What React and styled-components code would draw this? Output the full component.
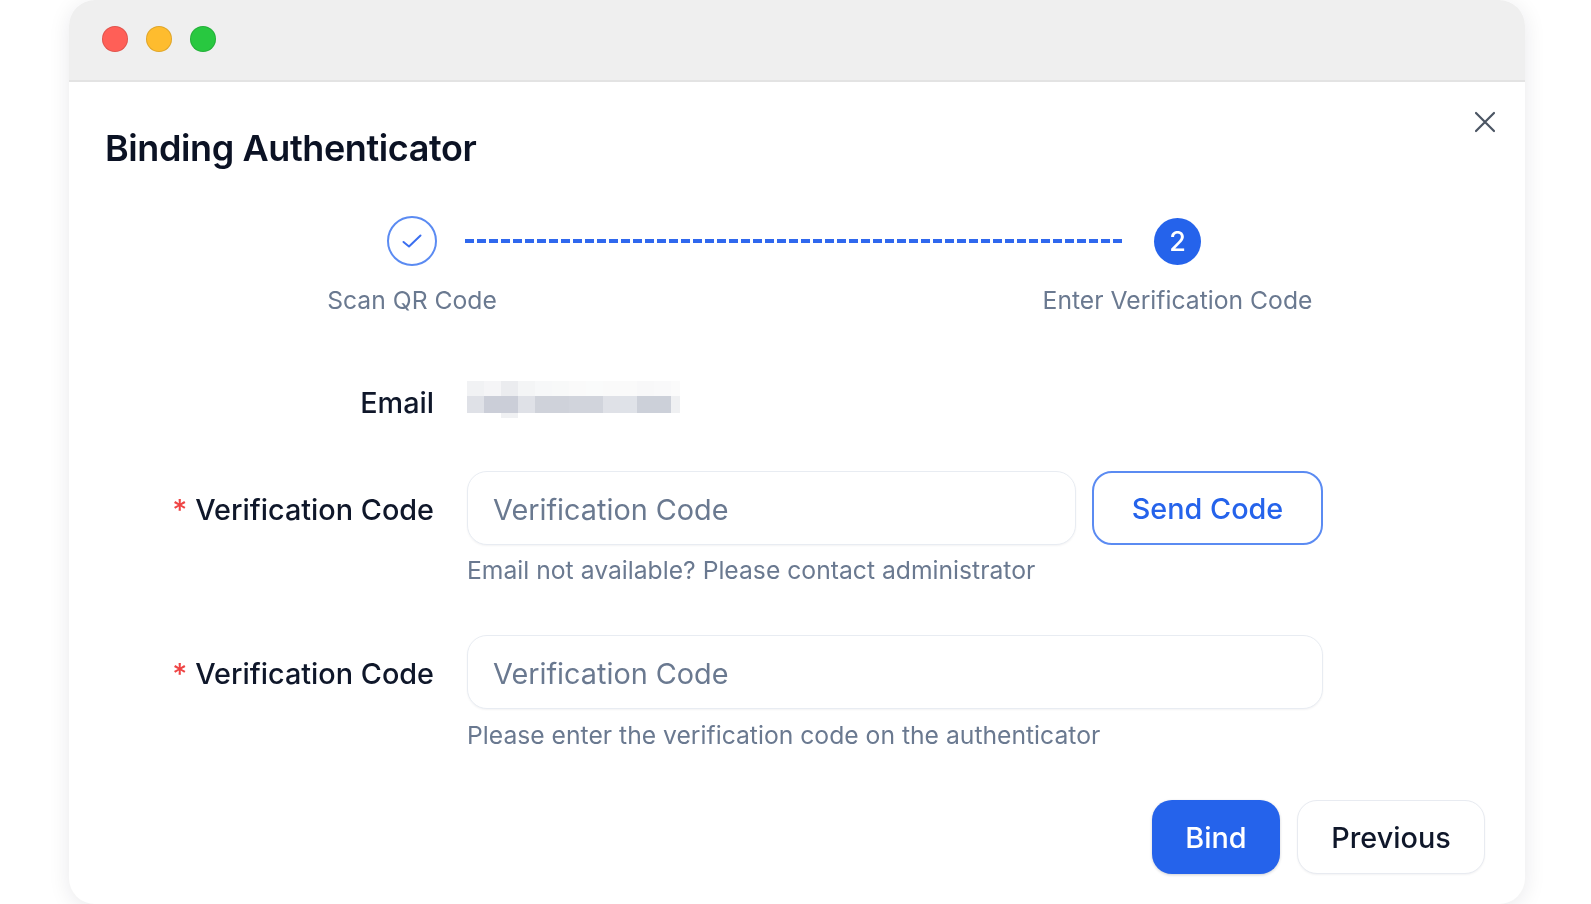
import React from "react";
import styled, { createGlobalStyle } from "styled-components";

const Global = createGlobalStyle`
  html, body { margin: 0; padding: 0; background: #fff; }
  body { font-family: Inter, "Liberation Sans", sans-serif; }
  * { box-sizing: border-box; }
`;

const Page = styled.div`
  height: 904px;
  overflow: hidden;
  padding-left: 69px;
`;

const Win = styled.div`
  position: relative;
  width: 1456px;
  height: 904px;
  background: #fff;
  border-radius: 26px;
  box-shadow: 0 4px 22px rgba(15, 23, 42, 0.09);
  overflow: hidden;
  filter: blur(0.6px);
`;

const TitleBar = styled.div`
  height: 82px;
  background: #efefef;
  border-bottom: 2px solid #e3e3e3;
  display: flex;
  align-items: center;
  gap: 18px;
  padding: 0 0 2px 33px;
`;

const Light = styled.span`
  width: 26px;
  height: 26px;
  border-radius: 50%;
  background: ${(p) => p.$c};
  box-shadow: inset 0 0 0 1px rgba(0, 0, 0, 0.12);
`;

const Body = styled.div`
  padding: 44px 40px 0 36px;
`;

const Close = styled.button`
  position: absolute;
  top: 109px;
  right: 27px;
  width: 26px;
  height: 26px;
  padding: 0;
  border: 0;
  background: none;
  color: #4b5563;
`;

const Title = styled.h1`
  margin: 0;
  font-size: 36px;
  line-height: 44px;
  font-weight: 600;
  letter-spacing: -0.4px;
  color: #0b1224;
`;

const Stepper = styled.div`
  margin: 46px 0 0 282px;
  width: 814px;
  display: grid;
  grid-template-columns: 50px 1fr 47px;
  column-gap: 28px;
  row-gap: 19px;
  align-items: center;
`;

const DoneDot = styled.div`
  width: 50px;
  height: 50px;
  border-radius: 50%;
  border: 2px solid #5b8bf2;
  color: #3b6ff0;
  display: flex;
  align-items: center;
  justify-content: center;
`;

const NumDot = styled.div`
  width: 47px;
  height: 47px;
  border-radius: 50%;
  background: #2563eb;
  color: #fff;
  font-size: 27px;
  font-weight: 500;
  display: flex;
  align-items: center;
  justify-content: center;
`;

const Dash = styled.div`
  height: 4px;
  margin-right: 2px;
  background: repeating-linear-gradient(90deg, #2f68ee 0 9px, transparent 9px 12px);
`;

const StepLabel = styled.div`
  grid-column: ${(p) => p.$col};
  justify-self: center;
  width: max-content;
  font-size: 24.7px;
  line-height: 30px;
  color: #6a7990;
`;

const Form = styled.div`
  margin-top: 66px;
  display: flex;
  flex-direction: column;
`;

const Row = styled.div`
  display: grid;
  grid-template-columns: 329px 856px;
  column-gap: 33px;
  margin-bottom: ${(p) => p.$mb}px;
`;

const Label = styled.label`
  text-align: right;
  font-size: 28.8px;
  font-weight: 500;
  line-height: ${(p) => p.$lh}px;
  color: #0f172a;
`;

const Star = styled.span`
  color: #ef4444;
  margin-right: 8px;
`;

const Mosaic = styled.svg`
  display: block;
  width: 213px;
  height: 40px;
`;

const Controls = styled.div`
  display: flex;
  gap: 16px;
`;

const Input = styled.input`
  flex: 1;
  min-width: 0;
  height: 74px;
  border: 1.5px solid #e8ecf2;
  border-radius: 20px;
  padding: 2px 25px 0;
  font: 400 28.8px Inter, sans-serif;
  background: #fff;
  box-shadow: 0 1px 2px rgba(15, 23, 42, 0.05);
  outline: none;
  &::placeholder { color: #6a7990; opacity: 1; }
`;

const Outline = styled.button`
  width: 231px;
  height: 74px;
  flex: none;
  border: 2px solid #5b8bf2;
  border-radius: 20px;
  background: #fff;
  color: #2563eb;
  font: 500 28.8px Inter, sans-serif;
`;

const Help = styled.div`
  margin-top: ${(p) => p.$mt}px;
  font-size: 24.7px;
  line-height: 30px;
  color: #6a7990;
`;

const Footer = styled.div`
  display: flex;
  justify-content: flex-end;
  gap: 17px;
  margin-top: 50px;
`;

const Primary = styled.button`
  width: 128px;
  height: 74px;
  border: 0;
  border-radius: 20px;
  background: #2563eb;
  color: #fff;
  font: 500 28.8px Inter, sans-serif;
  box-shadow: 0 1px 3px rgba(15, 23, 42, 0.2);
`;

const Secondary = styled.button`
  width: 188px;
  height: 74px;
  border: 1.5px solid #e8ebf1;
  border-radius: 20px;
  background: #fff;
  color: #0f172a;
  font: 500 28.8px Inter, sans-serif;
  box-shadow: 0 1px 2px rgba(15, 23, 42, 0.05);
`;

const top = ["#f1f2f4","#f5f5f7","#ebecef","#f4f5f6","#f7f8f9","#f8f9f9","#fafafa","#fafbfb","#fafafa","#fafafa","#f8f8f9","#f9f9fa","#fbfbfb"];
const bottom = ["#dfe1e7","#cbced8","#cbced8","#dfe1e7","#cfd2da","#cfd2da","#d1d4dc","#d1d4dc","#dfe1e7","#dfe2e8","#ccd0d9","#ccd0d9","#eff0f2"];

export default function App() {
  return (
    <>
      <Global />
      <Page>
        <Win>
          <TitleBar>
            <Light $c="#ff5f57" />
            <Light $c="#febc2e" />
            <Light $c="#28c840" />
          </TitleBar>
          <Close aria-label="Close">
            <svg width="26" height="26" viewBox="0 0 26 26" fill="none" stroke="currentColor" strokeWidth="2.2" strokeLinecap="round">
              <path d="M4 4 L22 22 M22 4 L4 22" />
            </svg>
          </Close>
          <Body>
            <Title>Binding Authenticator</Title>
            <Stepper>
              <DoneDot>
                <svg width="22" height="18" viewBox="0 0 22 18" fill="none" stroke="currentColor" strokeWidth="2" strokeLinecap="round" strokeLinejoin="round">
                  <path d="M2.5 10 L8 14.5 L19.5 3.5" />
                </svg>
              </DoneDot>
              <Dash />
              <NumDot>2</NumDot>
              <StepLabel $col={1}>Scan QR Code</StepLabel>
              <StepLabel $col={3}>Enter Verification Code</StepLabel>
            </Stepper>
            <Form>
              <Row $mb={46}>
                <Label $lh={44}>Email</Label>
                <Mosaic viewBox="0 0 213 40">
                  {top.map((c, i) => <rect key={i} x={i * 17} y="0" width="17.5" height="16" fill={c} />)}
                  {bottom.map((c, i) => <rect key={i} x={i * 17} y="15" width="17.5" height="17" fill={c} />)}
                  <rect x="34" y="32" width="17" height="5" fill="#f0f1f3" />
                </Mosaic>
              </Row>
              <Row $mb={50}>
                <Label $lh={78}><Star>*</Star>Verification Code</Label>
                <div>
                  <Controls>
                    <Input placeholder="Verification Code" />
                    <Outline>Send Code</Outline>
                  </Controls>
                  <Help $mt={10}>Email not available? Please contact administrator</Help>
                </div>
              </Row>
              <Row $mb={0}>
                <Label $lh={78}><Star>*</Star>Verification Code</Label>
                <div>
                  <Controls>
                    <Input placeholder="Verification Code" />
                  </Controls>
                  <Help $mt={11}>Please enter the verification code on the authenticator</Help>
                </div>
              </Row>
            </Form>
            <Footer>
              <Primary>Bind</Primary>
              <Secondary>Previous</Secondary>
            </Footer>
          </Body>
        </Win>
      </Page>
    </>
  );
}
